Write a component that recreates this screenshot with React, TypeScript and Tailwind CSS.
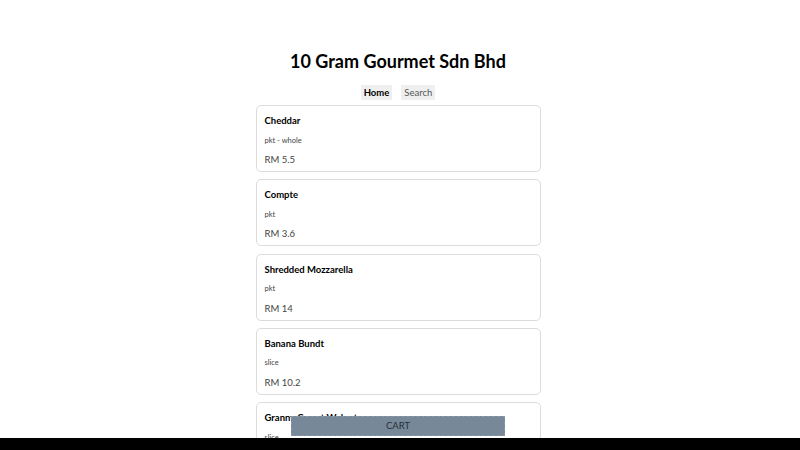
const ITEMS = [
  { name: 'Cheddar', unit: 'pkt - whole', price: 'RM 5.5' },
  { name: 'Compte', unit: 'pkt', price: 'RM 3.6' },
  { name: 'Shredded Mozzarella', unit: 'pkt', price: 'RM 14' },
  { name: 'Banana Bundt', unit: 'slice', price: 'RM 10.2' },
  { name: 'Granny Carrot Walnut', unit: 'slice', price: 'RM 9.8' },
]

export default function App() {
  return (
    <div className="min-h-screen bg-white text-black" style={{ fontFamily: 'Lato, "Noto Sans", sans-serif' }}>
      <div className="flex justify-center pr-[4px]">
        <div className="w-[285px] pt-[49px] pb-[60px]">
          <h1 className="text-center text-[18px] font-bold leading-[24px] whitespace-nowrap">10 Gram Gourmet Sdn Bhd</h1>
          <nav className="mt-[12px] flex justify-center gap-[9px]">
            <button className="bg-[#efefef] px-[3px] text-[9.5px] font-bold leading-[15px]">Home</button>
            <button className="bg-[#efefef] px-[3px] text-[9.5px] leading-[15px] text-[#555]">Search</button>
          </nav>
          <div className="mt-[5px] flex flex-col gap-[7.25px]">
            {ITEMS.map((item) => (
              <div key={item.name} className="h-[67px] rounded-[5px] border border-[#dcdcdc] px-[8px] pt-[9px]">
                <div className="text-[9.5px] font-bold leading-[12px]">{item.name}</div>
                <div className="mt-[8.5px] text-[7.5px] leading-[10px] text-[#444]">{item.unit}</div>
                <div className="mt-[8.5px] text-[9.5px] leading-[12px] text-[#444]">{item.price}</div>
              </div>
            ))}
          </div>
        </div>
      </div>
      <button className="fixed bottom-[14px] left-[291px] h-[20px] w-[214px] border border-dashed border-[#8a98a6] bg-[#778899] text-[9.5px] text-[#27313b]">
        CART
      </button>
      <div className="fixed bottom-0 left-0 h-[12px] w-full bg-black" />
    </div>
  )
}
